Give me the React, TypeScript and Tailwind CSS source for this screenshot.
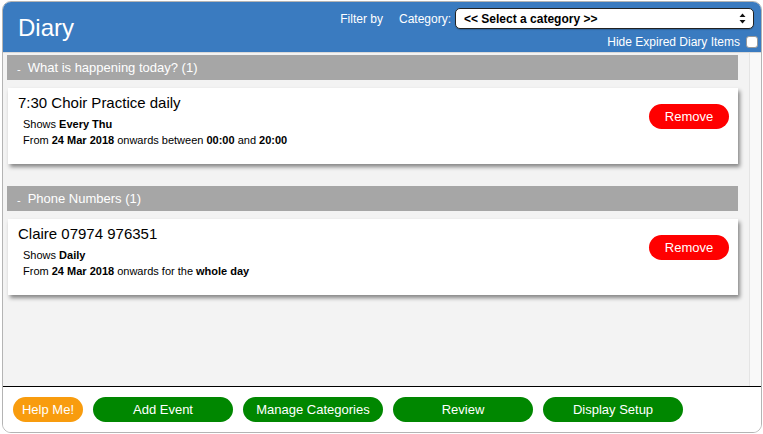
import React from "react";

const font = "font-['Liberation_Sans','Helvetica_Neue',Arial,sans-serif]";

type Entry = {
  section: string;
  title: string;
  shows: string;
  from: string;
  tail: React.ReactNode;
};

const entries: Entry[] = [
  {
    section: "What is happening today? (1)",
    title: "7:30 Choir Practice daily",
    shows: "Every Thu",
    from: "24 Mar 2018",
    tail: (
      <>
        onwards between <b>00:00</b> and <b>20:00</b>
      </>
    ),
  },
  {
    section: "Phone Numbers (1)",
    title: "Claire 07974 976351",
    shows: "Daily",
    from: "24 Mar 2018",
    tail: (
      <>
        onwards for the <b>whole day</b>
      </>
    ),
  },
];

const footerButtons = ["Add Event", "Manage Categories", "Review", "Display Setup"];

function SelectArrows() {
  return (
    <svg width="7" height="11" viewBox="0 0 7 11" className="shrink-0">
      <path d="M3.5 0.5 L6.5 4 L0.5 4 Z" fill="#111" />
      <path d="M3.5 10.5 L6.5 7 L0.5 7 Z" fill="#111" />
    </svg>
  );
}

export default function App() {
  return (
    <div className={`w-[763px] h-[434px] bg-white pl-[2px] pr-[1px] pt-[1px] ${font}`}>
      <div className="flex h-[432px] flex-col overflow-hidden rounded-[9px] border border-[#b4b4b4] bg-white">
        {/* header */}
        <div className="flex h-[51px] shrink-0 justify-between border-b border-[#d9d9d9] bg-[#3a7bc0]">
          <div className="pl-[15px] pt-[12px] text-[24px] leading-[28px] text-white">Diary</div>
          <div className="flex flex-col items-end pr-[3px] pt-[6px]">
            <div className="mr-[4px] flex h-[21px] items-center text-[12px] text-white">
              <span className="mr-[16px]">Filter by</span>
              <span className="mr-[4px]">Category:</span>
              <div className="flex h-[21px] w-[299px] items-center justify-between rounded-[5px] border border-[#222] bg-white pl-[8px] pr-[7px] shadow-[0_1px_1px_rgba(0,0,0,0.2)]">
                <span className="text-[12px] font-bold text-black">&lt;&lt; Select a category &gt;&gt;</span>
                <SelectArrows />
              </div>
            </div>
            <div className="mt-[6px] flex h-[14px] items-center text-[12px] text-white">
              <span>Hide Expired Diary Items</span>
              <span className="ml-[6px] h-[12px] w-[12px] rounded-[3px] border border-[#9a9a9a] bg-white" />
            </div>
          </div>
        </div>

        {/* content */}
        <div className="flex min-h-0 flex-1 bg-[#f3f3f3]">
          <div className="flex-1 pl-[4px] pr-[11px] pt-[2px]">
            {entries.map((e) => (
              <div key={e.section} className="mb-[22px]">
                <div className="flex h-[25px] items-center bg-[#a6a6a6] pl-[10px] text-[13px] text-white">
                  <span className="mr-[7px] translate-y-[2px] text-[11px]">-</span>
                  <span>{e.section}</span>
                </div>
                <div className="ml-[1px] mt-[8px] flex h-[76px] items-start justify-between bg-white pl-[10px] pr-[9px] pt-[6px] shadow-[2px_3px_4px_rgba(0,0,0,0.45)]">
                  <div>
                    <div className="text-[15px] leading-[18px] text-black">{e.title}</div>
                    <div className="mt-[4px] pl-[5px] text-[11px] leading-[16px] text-black">
                      <div>
                        Shows <b>{e.shows}</b>
                      </div>
                      <div>
                        From <b>{e.from}</b> {e.tail}
                      </div>
                    </div>
                  </div>
                  <button className="mt-[10px] h-[25px] w-[80px] rounded-full bg-[#ff0000] text-[13px] text-white">
                    Remove
                  </button>
                </div>
              </div>
            ))}
          </div>
          <div className="w-[12px] border-l border-[#e4e4e4] bg-[#f9f9f9]" />
        </div>

        {/* footer */}
        <div className="flex h-[46px] shrink-0 items-start gap-[10px] border-t border-black bg-white pl-[10px] pt-[10px]">
          <button className="h-[25px] w-[70px] rounded-full bg-[#f89c0e] text-[13px] text-white">Help Me!</button>
          {footerButtons.map((b) => (
            <button key={b} className="h-[25px] w-[140px] rounded-full bg-[#008700] text-[13px] text-white">
              {b}
            </button>
          ))}
        </div>
      </div>
    </div>
  );
}
